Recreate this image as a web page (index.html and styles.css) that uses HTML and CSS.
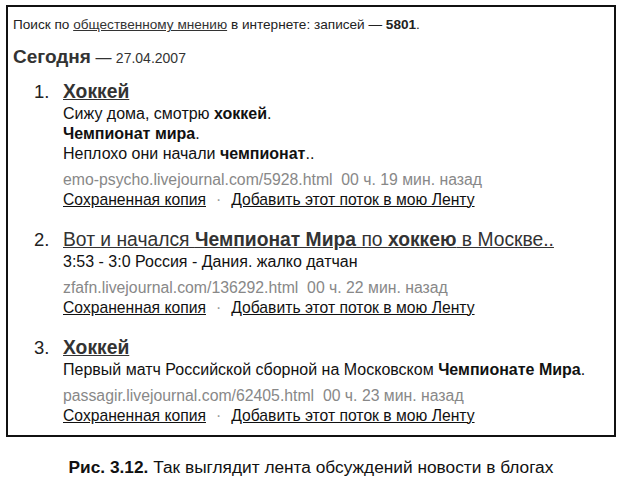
FILE: index.html
```html
<!DOCTYPE html>
<html lang="ru">
<head>
<meta charset="utf-8">
<title>Лента</title>
<link rel="stylesheet" href="styles.css">
</head>
<body>
<div class="frame">
  <div class="summary">Поиск по <a class="lnk" href="#">общественному мнению</a> в интернете: записей — <b>5801</b>.</div>
  <div class="day"><span class="day-name">Сегодня</span> <span class="dash">—</span> <span class="date">27.04.2007</span></div>
  <div class="items">
    <div class="item">
      <div class="num">1.</div>
      <div class="content">
        <div class="title"><a href="#" class="title-link"><b>Хоккей</b></a></div>
        <div class="text">Сижу дома, смотрю <b>хоккей</b>.</div>
        <div class="text"><b>Чемпионат мира</b>.</div>
        <div class="text">Неплохо они начали <b>чемпионат</b>..</div>
        <div class="meta">emo-psycho.livejournal.com/5928.html&nbsp; 00 ч. 19 мин. назад</div>
        <div class="actions"><a href="#">Сохраненная копия</a><span class="sep">·</span><a href="#">Добавить этот поток в мою Ленту</a></div>
      </div>
    </div>
    <div class="item">
      <div class="num">2.</div>
      <div class="content">
        <div class="title"><a href="#" class="title-link">Вот и начался <b>Чемпионат Мира</b> по <b>хоккею</b> в Москве..</a></div>
        <div class="text">3:53 - 3:0 Россия - Дания. жалко датчан</div>
        <div class="meta">zfafn.livejournal.com/136292.html&nbsp; 00 ч. 22 мин. назад</div>
        <div class="actions"><a href="#">Сохраненная копия</a><span class="sep">·</span><a href="#">Добавить этот поток в мою Ленту</a></div>
      </div>
    </div>
    <div class="item">
      <div class="num">3.</div>
      <div class="content">
        <div class="title"><a href="#" class="title-link"><b>Хоккей</b></a></div>
        <div class="text">Первый матч Российской сборной на Московском <b>Чемпионате Мира</b>.</div>
        <div class="meta">passagir.livejournal.com/62405.html&nbsp; 00 ч. 23 мин. назад</div>
        <div class="actions"><a href="#">Сохраненная копия</a><span class="sep">·</span><a href="#">Добавить этот поток в мою Ленту</a></div>
      </div>
    </div>
  </div>
</div>
<div class="caption"><b>Рис. 3.12.</b> Так выглядит лента обсуждений новости в блогах</div>
</body>
</html>
```
FILE: styles.css
```css
html, body {
  margin: 0;
  padding: 0;
  background: #fff;
}
body {
  font-family: "Liberation Sans", Arial, sans-serif;
  color: #111;
}
.frame {
  margin: 5px 6px 0 6px;
  border: 2px solid #111;
  padding: 10px 10px 14px 5px;
  height: 432px;
  box-sizing: border-box;
}
.summary {
  font-size: 13.6px;
  line-height: 16px;
  color: #222;
}
.lnk {
  color: #333;
  text-decoration: underline;
}
.day {
  margin-top: 12px;
  line-height: 24px;
  color: #333;
}
.day-name {
  font-size: 19px;
  font-weight: bold;
}
.dash {
  font-size: 16px;
}
.date {
  font-size: 14px;
}
.items {
  margin-top: 10px;
}
.item {
  display: flex;
  margin-bottom: 19px;
}
.item:last-child {
  margin-bottom: 0;
}
.num {
  width: 29px;
  padding-left: 21px;
  font-size: 18.5px;
  line-height: 24px;
  color: #222;
  flex: none;
}
.content {
  flex: 1;
}
.title {
  font-size: 19.3px;
  line-height: 24px;
}
.title-link {
  color: #333;
  text-decoration: underline;
}
.text {
  font-size: 16px;
  line-height: 20px;
  color: #111;
}
.meta {
  margin-top: 5.5px;
  font-size: 15.8px;
  line-height: 20px;
  color: #888;
}
.actions {
  font-size: 15.7px;
  line-height: 19.5px;
}
.actions a {
  color: #111;
  text-decoration: underline;
}
.sep {
  color: #999;
  padding: 0 10px;
}
.caption {
  margin-top: 20px;
  text-align: center;
  font-size: 17.3px;
  line-height: 20px;
  color: #111;
}
```
